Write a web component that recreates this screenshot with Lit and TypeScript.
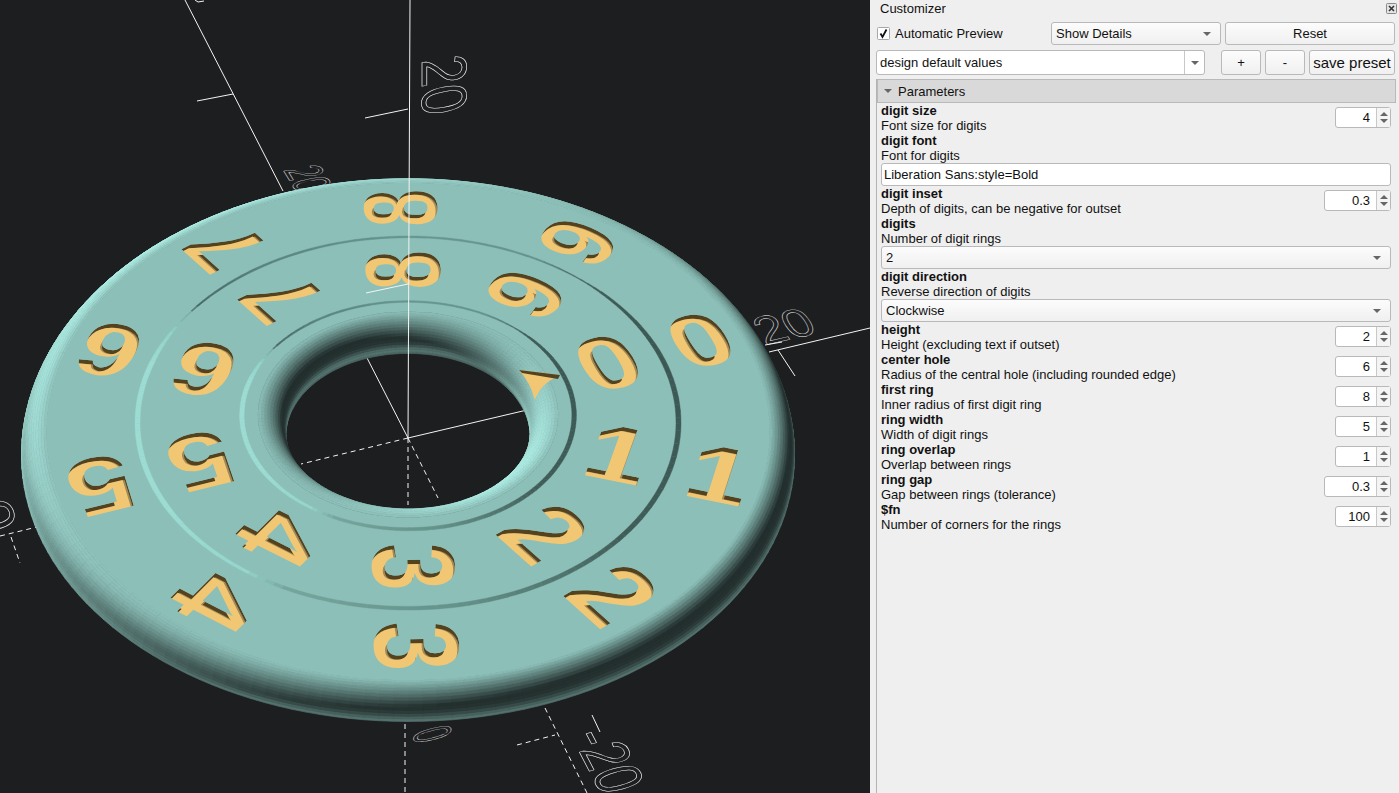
import {LitElement, css, html, svg} from 'lit';
import {customElement} from 'lit/decorators.js';

// disc plane -> screen, fitted by eye against the reference
const CX = 408;
const CY = 411;
const B = 0.685;
const P = 2.3e-4;
const KZ = 0.73;
const THETA0 = -1.5;

const RAD = Math.PI / 180;
const TEAL = [140, 191, 184];

type Vec = [number, number];

const proj = (x: number, y: number, z = 0): Vec => {
	const w = 1 + P * y;
	return [CX + x / w, CY - (B * y) / w - KZ * z];
};

const polar = (r: number, deg: number, z = 0) =>
	proj(r * Math.sin(deg * RAD), r * Math.cos(deg * RAD), z);

const pts = (list: Vec[]) =>
	list.map((p) => `${p[0].toFixed(1)},${p[1].toFixed(1)}`).join(' ');

const shade = (nx: number, ny: number, nz: number) => {
	const main = Math.max(0, -0.5 * nx + 0.42 * ny + 0.76 * nz);
	const hor = Math.sqrt(Math.max(0, 1 - nz * nz));
	const edge = Math.pow(hor, 30) * 0.36;
	const k = (main + edge + 0.25) / 1.01;
	return `rgb(${TEAL.map((c) => Math.min(255, Math.round(c * k))).join(',')})`;
};

const facing = (ny: number, nz: number) => -0.73 * ny + 0.68 * nz > -0.02;

const STEP = 2;

// rounded outer edge, deepest band first so the far side overlaps correctly
function rimQuads() {
	const rf = 360;
	const rho = 25;
	const drop = 29;
	const bands = 14;
	const out = [];
	for (let j = bands - 1; j >= 0; j--) {
		const t0 = (j / bands) * 90;
		const t1 = ((j + 1) / bands) * 90;
		const tm = ((t0 + t1) / 2) * RAD;
		const h = drop * Math.sin(tm);
		const v = rho * Math.cos(tm);
		const len = Math.hypot(h, v);
		for (let a = 0; a < 360; a += STEP) {
			const am = (a + STEP / 2) * RAD;
			const nx = (Math.sin(am) * h) / len;
			const ny = (Math.cos(am) * h) / len;
			const nz = v / len;
			if (!facing(ny, nz)) continue;
			const r0 = rf + rho * Math.sin(t0 * RAD);
			const r1 = rf + rho * Math.sin(t1 * RAD);
			const z0 = -drop * (1 - Math.cos(t0 * RAD));
			const z1 = -drop * (1 - Math.cos(t1 * RAD));
			out.push({
				p: pts([polar(r0, a, z0), polar(r0, a + STEP, z0), polar(r1, a + STEP, z1), polar(r1, a, z1)]),
				c: shade(nx, ny, nz),
			});
		}
	}
	return out;
}

// rounded lip of the centre hole
function holeQuads() {
	const rb = 150;
	const rho = 28;
	const bands = 16;
	const out = [];
	for (let j = bands - 1; j >= 0; j--) {
		const t0 = (j / bands) * 100;
		const t1 = ((j + 1) / bands) * 100;
		const tm = ((t0 + t1) / 2) * RAD;
		for (let a = 0; a < 360; a += STEP) {
			const am = (a + STEP / 2) * RAD;
			const nx = -Math.sin(am) * Math.sin(tm);
			const ny = -Math.cos(am) * Math.sin(tm);
			const nz = Math.cos(tm);
			if (!facing(ny, nz)) continue;
			const r0 = rb - rho * Math.sin(t0 * RAD);
			const r1 = rb - rho * Math.sin(t1 * RAD);
			const z0 = -rho * (1 - Math.cos(t0 * RAD));
			const z1 = -rho * (1 - Math.cos(t1 * RAD));
			out.push({
				p: pts([polar(r0, a, z0), polar(r0, a + STEP, z0), polar(r1, a + STEP, z1), polar(r1, a, z1)]),
				c: shade(nx, ny, nz),
			});
		}
	}
	return out;
}

function annulus(r0: number, r1: number) {
	const ring = (r: number, dir: number) => {
		let d = '';
		for (let a = 0; a <= 360; a += 2) {
			const p = polar(r, a * dir);
			d += `${a ? 'L' : 'M'}${p[0].toFixed(1)} ${p[1].toFixed(1)}`;
		}
		return d + 'Z';
	};
	return ring(r1, 1) + ring(r0, -1);
}

// groove colour and width as [angle, r, g, b, width]
const GROOVE: number[][] = [
	[0, 104, 150, 144, 3],
	[30, 100, 146, 140, 2.4],
	[42, 70, 100, 96, 1],
	[50, 62, 90, 86, 3],
	[70, 60, 88, 84, 5],
	[130, 64, 92, 88, 5],
	[170, 100, 146, 138, 5],
	[205, 118, 165, 157, 4],
	[215, 150, 214, 204, 3.2],
	[240, 156, 220, 210, 5],
	[285, 156, 220, 210, 5],
	[296, 146, 210, 200, 3],
	[303, 120, 170, 162, 1],
	[306, 70, 100, 96, 2],
	[325, 88, 130, 124, 3],
	[360, 104, 150, 144, 3],
];

const grooveAt = (deg: number) => {
	for (let i = 1; i < GROOVE.length; i++) {
		if (deg <= GROOVE[i][0]) {
			const a = GROOVE[i - 1];
			const b = GROOVE[i];
			const k = (deg - a[0]) / (b[0] - a[0]);
			return a.map((v, n) => v + (b[n] - v) * k);
		}
	}
	return GROOVE[0];
};

function grooveQuads(r: number) {
	const out = [];
	for (let a = 0; a < 360; a += 2) {
		const g = grooveAt(a + 1);
		const w = (g[4] * (r > 200 ? 1 : 0.9)) / 2;
		out.push({
			p: pts([polar(r - w, a), polar(r - w, a + 2), polar(r + w, a + 2), polar(r + w, a)]),
			c: `rgb(${Math.round(g[1])},${Math.round(g[2])},${Math.round(g[3])})`,
		});
	}
	return out;
}

interface Digit {
	id: string;
	ch: string;
	m: string;
	depth: number;
}

function digitList() {
	const list: Digit[] = [];
	[318, 216].forEach((r, ring) => {
		for (let i = 0; i < 10; i++) {
			const deg = THETA0 + 36 * i;
			const rot = (deg - 90) * RAD;
			const x = r * Math.sin(deg * RAD);
			const y = r * Math.cos(deg * RAD);
			const o = proj(x, y);
			const along = (dx: number, dy: number): Vec => {
				const q = proj(x + dx, y + dy);
				return [q[0] - o[0], q[1] - o[1]];
			};
			const right = along(Math.cos(rot), -Math.sin(rot));
			const up = along(Math.sin(rot), Math.cos(rot));
			const m = [right[0], right[1], -up[0], -up[1], o[0], o[1]].map((v) => v.toFixed(4)).join(' ');
			list.push({id: `g${ring}${i}`, ch: String((8 + i) % 10), m, depth: 4 - y / 700});
		}
	});
	return list;
}

// scale labels of the axes: origin, advance per em, up per em
const LABELS: [string, number, number, number, number, number, number][] = [
	['20', 422, 60, 0, 52, 64, -11.5],
	['20', 283, 170, 13, 21, 51, -10],
	['20', 765, 345, 49, -11, -24, -37],
	['0', 414, 732, 0, 24, 53, -13],
	['-20', 571, 736, 22, 42, 63, -18],
	['0', -34, 505, 20, 56, 60, -14],
];

const SOLID: number[][] = [
	[185, 0, 283, 191],
	[197, 101, 233, 94],
	[365, 118, 408, 109],
	[769, 352, 870, 328],
	[778, 350, 795, 376],
	[765, 345, 782, 342],
	[365, 354, 408, 438],
	[408, 438, 527, 410],
	[592, 715, 600, 732],
	[195, 0, 198, 2],
	[198, 2, 204, 1],
];

const DASHED: number[][] = [
	[408, 438, 301, 464],
	[408, 438, 438, 498],
	[408, 438, 408, 505],
	[405, 724, 405, 793],
	[545, 708, 587, 793],
	[517, 745, 555, 735],
	[0, 536, 37, 527],
	[11, 537, 20, 563],
];

const RIM = rimQuads();
const HOLE = holeQuads();
const GROOVES = [...grooveQuads(270), ...grooveQuads(166)];
const DIGITS = digitList();

@customElement('scene-view')
export class SceneView extends LitElement {
	render() {
		return html`
			<svg width="870" height="793" viewBox="0 0 870 793">
				<defs>
					${DIGITS.map(
						(d) => svg`
							<text id=${d.id} class="digit" transform="matrix(${d.m})" y="39">${d.ch}</text>
							<clipPath id="c${d.id}"><use href="#${d.id}"></use></clipPath>
						`,
					)}
				</defs>
				<rect width="870" height="793" fill="#1d1e20"></rect>
				${SOLID.map((l) => svg`<line class="axis" x1=${l[0]} y1=${l[1]} x2=${l[2]} y2=${l[3]}></line>`)}
				${DASHED.map((l) => svg`<line class="axis dash" x1=${l[0]} y1=${l[1]} x2=${l[2]} y2=${l[3]}></line>`)}
				${LABELS.map(
					(l) => svg`
						<text
							class="scale"
							transform="matrix(${l[3] / 100} ${l[4] / 100} ${-l[5] / 100} ${-l[6] / 100} ${l[1]} ${l[2]})"
						>${l[0]}</text>
					`,
				)}
				${RIM.map((q) => svg`<polygon points=${q.p} fill=${q.c} stroke=${q.c} stroke-width="0.7"></polygon>`)}
				${HOLE.map((q) => svg`<polygon points=${q.p} fill=${q.c} stroke=${q.c} stroke-width="0.7"></polygon>`)}
				<path d=${annulus(150, 360.5)} fill="rgb(140,191,184)" fill-rule="evenodd"></path>
				${GROOVES.map((q) => svg`<polygon points=${q.p} fill=${q.c} stroke=${q.c} stroke-width="0.4"></polygon>`)}
				${DIGITS.map(
					(d) => svg`
						<g clip-path="url(#c${d.id})">
							<use href="#${d.id}" fill="#54421f"></use>
							<use href="#${d.id}" fill="#a08a5a" transform="translate(0 ${d.depth})"></use>
							<use href="#${d.id}" fill="#f2c773" transform="translate(-2 ${d.depth})"></use>
						</g>
					`,
				)}
				<path d="M519 370 L560 375 Q540 384 535 400 Q530 382 519 370Z" fill="#f2c773"></path>
				<path d="M519 370 L560 375 L558 379 L522 373Z" fill="#54421f"></path>
				<line class="axis" x1="410" y1="0" x2="408" y2="438"></line>
				<line class="axis" x1="366" y1="293" x2="408" y2="284"></line>
			</svg>
		`;
	}

	static styles = css`
		:host {
			display: block;
			width: 870px;
			height: 793px;
		}

		svg {
			display: block;
		}

		.digit {
			font-family: 'Liberation Sans', sans-serif;
			font-weight: 700;
			font-size: 112px;
			text-anchor: middle;
			text-rendering: geometricPrecision;
		}

		.axis {
			stroke: #f4f4f4;
			stroke-width: 1;
		}

		.dash {
			stroke-dasharray: 5 4;
		}

		.scale {
			font-family: 'Liberation Sans', sans-serif;
			font-size: 100px;
			fill: none;
			stroke: #f4f4f4;
			stroke-width: 1;
			vector-effect: non-scaling-stroke;
			text-rendering: geometricPrecision;
		}
	`;
}

interface Param {
	name: string;
	desc: string;
	value?: string;
	wide?: boolean;
	text?: string;
	choice?: string;
}

const PARAMS: Param[] = [
	{name: 'digit size', desc: 'Font size for digits', value: '4'},
	{name: 'digit font', desc: 'Font for digits', text: 'Liberation Sans:style=Bold'},
	{name: 'digit inset', desc: 'Depth of digits, can be negative for outset', value: '0.3', wide: true},
	{name: 'digits', desc: 'Number of digit rings', choice: '2'},
	{name: 'digit direction', desc: 'Reverse direction of digits', choice: 'Clockwise'},
	{name: 'height', desc: 'Height (excluding text if outset)', value: '2'},
	{name: 'center hole', desc: 'Radius of the central hole (including rounded edge)', value: '6'},
	{name: 'first ring', desc: 'Inner radius of first digit ring', value: '8'},
	{name: 'ring width', desc: 'Width of digit rings', value: '5'},
	{name: 'ring overlap', desc: 'Overlap between rings', value: '1'},
	{name: 'ring gap', desc: 'Gap between rings (tolerance)', value: '0.3', wide: true},
	{name: '$fn', desc: 'Number of corners for the rings', value: '100'},
];

@customElement('app-root')
export class AppRoot extends LitElement {
	private renderParam(p: Param) {
		const spin = p.value
			? html`
					<div class="spin ${p.wide ? 'wide' : ''}">
						<span class="spin-value">${p.value}</span>
						<span class="spin-arrows"><i class="up"></i><i class="down"></i></span>
					</div>
				`
			: '';
		return html`
			<div class="param">
				<div class="param-text">
					<b>${p.name}</b>
					<span>${p.desc}</span>
				</div>
				${spin}
			</div>
			${p.text ? html`<div class="line-edit">${p.text}</div>` : ''}
			${p.choice
				? html`<div class="choice"><span>${p.choice}</span><i class="down"></i></div>`
				: ''}
		`;
	}

	render() {
		return html`
			<scene-view></scene-view>
			<aside class="panel">
				<div class="title">
					<span>Customizer</span>
					<svg class="close" width="11" height="11" viewBox="0 0 11 11">
						<rect x="0.5" y="0.5" width="10" height="10" rx="1" fill="#e4e4e4" stroke="#8a8a8a"></rect>
						<path d="M3 3 L8 8 M8 3 L3 8" stroke="#333" stroke-width="1.6"></path>
					</svg>
				</div>
				<div class="bar">
					<label class="check">
						<svg width="13" height="13" viewBox="0 0 13 13">
							<rect x="0.5" y="0.5" width="12" height="12" rx="1" fill="#fff" stroke="#a8a8a8"></rect>
							<path d="M3.5 6.5 L5.5 10 L9.5 2.5" fill="none" stroke="#111" stroke-width="1.8"></path>
						</svg>
						Automatic Preview
					</label>
					<div class="select"><span>Show Details</span><i class="down"></i></div>
					<button class="reset">Reset</button>
				</div>
				<div class="bar presets">
					<div class="preset">
						<span>design default values</span>
						<span class="preset-arrow"><i class="down"></i></span>
					</div>
					<button class="small">+</button>
					<button class="small">-</button>
					<button class="save">save preset</button>
				</div>
				<div class="frame">
					<div class="section"><i class="down"></i>Parameters</div>
					<div class="params">${PARAMS.map((p) => this.renderParam(p))}</div>
				</div>
			</aside>
		`;
	}

	static styles = css`
		:host {
			display: flex;
			width: 1399px;
			height: 793px;
			overflow: hidden;
			background: #efefef;
			color: #111;
			font: 13px/15px 'Liberation Sans', Arial, sans-serif;
		}

		.panel {
			flex: 1;
			min-width: 0;
			display: flex;
			flex-direction: column;
			padding-left: 6px;
		}

		.title {
			height: 22px;
			display: flex;
			justify-content: space-between;
			align-items: flex-start;
			padding: 1px 2px 0 4px;
			box-sizing: border-box;
		}

		.close {
			margin-top: 2px;
		}

		.bar {
			display: flex;
			align-items: center;
			padding-right: 4px;
			height: 23px;
		}

		.check {
			width: 175px;
			display: flex;
			align-items: center;
			gap: 5px;
			padding-left: 1px;
			box-sizing: border-box;
		}

		button,
		.select,
		.choice {
			box-sizing: border-box;
			height: 23px;
			border: 1px solid #b9b9b9;
			border-radius: 3px;
			background: linear-gradient(#fcfcfc, #f0f0f0);
			font: inherit;
			color: inherit;
			padding: 0;
		}

		.select {
			width: 170px;
			display: flex;
			align-items: center;
			justify-content: space-between;
			padding: 0 9px 0 4px;
		}

		.reset {
			width: 170px;
			margin-left: 4px;
		}

		.presets {
			margin-top: 5px;
			height: 25px;
		}

		.preset {
			width: 329px;
			height: 25px;
			box-sizing: border-box;
			border: 1px solid #b9b9b9;
			border-radius: 3px;
			background: #fff;
			display: flex;
			align-items: center;
			justify-content: space-between;
			padding-left: 3px;
		}

		.preset-arrow {
			width: 19px;
			height: 100%;
			border-left: 1px solid #c8c8c8;
			display: flex;
			align-items: center;
			justify-content: center;
		}

		.small {
			width: 40px;
			height: 25px;
			margin-right: 4px;
		}

		.small:first-of-type {
			margin-left: 16px;
		}

		.save {
			width: 86px;
			height: 25px;
			font-size: 15px;
		}

		.frame {
			flex: 1;
			margin-top: 4px;
			border-left: 1px solid #b4b4b4;
			display: flex;
			flex-direction: column;
		}

		.section {
			height: 24px;
			box-sizing: border-box;
			margin-right: 3px;
			border: 1px solid #b9b9b9;
			background: #d9d9d9;
			display: flex;
			align-items: center;
			gap: 6px;
			padding-left: 6px;
		}

		.params {
			padding: 0 8px 0 4px;
			display: flex;
			flex-direction: column;
		}

		.param {
			height: 30px;
			display: flex;
			justify-content: space-between;
			align-items: center;
		}

		.param-text {
			display: flex;
			flex-direction: column;
		}

		.spin {
			box-sizing: border-box;
			width: 56px;
			height: 21px;
			margin-bottom: 1px;
			border: 1px solid #b9b9b9;
			border-radius: 3px;
			background: #fff;
			display: flex;
			align-items: center;
			justify-content: flex-end;
		}

		.spin.wide {
			width: 67px;
		}

		.spin-value {
			padding-right: 6px;
		}

		.spin-arrows {
			width: 13px;
			height: 100%;
			border-left: 1px solid #c8c8c8;
			background: #f4f4f4;
			display: flex;
			flex-direction: column;
			align-items: center;
			justify-content: center;
			gap: 3px;
		}

		.line-edit {
			box-sizing: border-box;
			height: 23px;
			border: 1px solid #b9b9b9;
			border-radius: 3px;
			background: #fff;
			padding-left: 2px;
			line-height: 21px;
		}

		.choice {
			display: flex;
			align-items: center;
			justify-content: space-between;
			padding: 0 9px 0 4px;
			margin-bottom: 0;
		}

		i.down,
		i.up {
			display: block;
			width: 0;
			height: 0;
			border-left: 4px solid transparent;
			border-right: 4px solid transparent;
		}

		i.down {
			border-top: 4px solid #666;
		}

		i.up {
			border-bottom: 4px solid #666;
		}
	`;
}

declare global {
	interface HTMLElementTagNameMap {
		'app-root': AppRoot;
		'scene-view': SceneView;
	}
}
